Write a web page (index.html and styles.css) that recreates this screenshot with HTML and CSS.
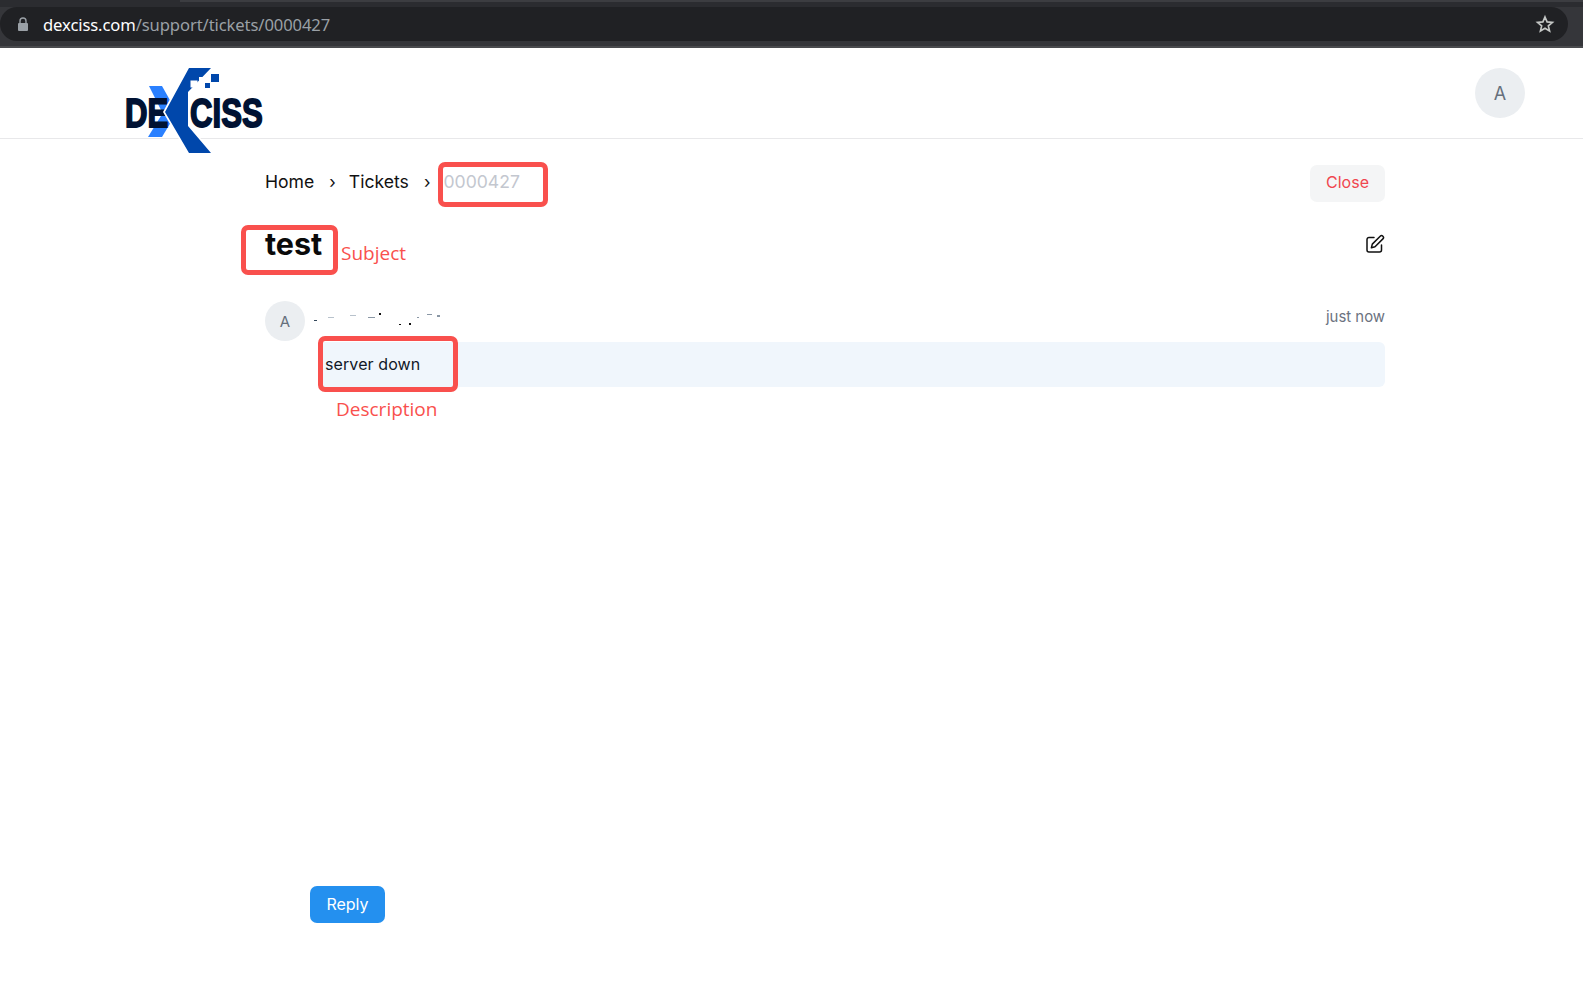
FILE: index.html
```html
<!DOCTYPE html>
<html lang="en">
<head>
<meta charset="utf-8">
<title>Ticket 0000427</title>
<link rel="stylesheet" href="styles.css">
</head>
<body>
<div class="browser">
  <div class="tabstrip"><div class="tab-edge"></div></div>
  <div class="toolbar">
    <div class="omnibox">
      <svg class="lock" viewBox="0 0 12 14" width="12" height="14"><path d="M3 6V4a3 3 0 0 1 6 0v2" fill="none" stroke="#9aa0a6" stroke-width="1.4"/><rect x="1" y="6" width="10" height="8" rx="1" fill="#9aa0a6"/></svg>
      <span class="url"><span class="host">dexciss.com</span>/support/tickets/0000427</span>
      <svg class="star" viewBox="0 0 24 24" width="20" height="20"><path d="M12 3.6l2.5 5.9 6.4.5-4.9 4.2 1.5 6.2-5.5-3.3-5.5 3.3 1.5-6.2-4.9-4.2 6.4-.5z" fill="none" stroke="#c4c7c5" stroke-width="2" stroke-linejoin="miter"/></svg>
    </div>
  </div>
</div>

<header class="site-header">
  <svg class="logo" viewBox="0 0 150 85" width="150" height="85">
    <polygon points="25,18 38,18 47,34 39,46" fill="#2a80ff"/>
    <polygon points="24,69 38,69 47,54 40,43" fill="#2a80ff"/>
    <text class="logo-text" x="1.3" y="59" transform="scale(0.76 1)">DE</text>
    <polygon points="63,0 89,0 66,24 66,58 89,85 63,85 39,44" fill="#fff"/>
    <polygon points="65,0 87,0 64,24 64,58 87,85 65,85 41,44" fill="#0047ab"/>
    <text class="logo-text" x="87" y="59" transform="scale(0.76 1)">CISS</text>
    <rect x="67" y="13" width="6" height="6" fill="#fff" stroke="#fff"/>
    <rect x="75" y="9" width="4" height="4" fill="#fff"/>
    <rect x="81" y="15" width="5" height="5" fill="#0047ab"/>
    <rect x="87" y="6" width="8" height="8" fill="#0047ab"/>
  </svg>
  <div class="avatar avatar-lg">A</div>
</header>

<main class="page">
  <div class="crumb-row">
    <nav class="crumbs">
      <span>Home</span><span class="sep">›</span><span>Tickets</span><span class="sep">›</span><span class="current">0000427</span>
    </nav>
    <button class="btn-close">Close</button>
  </div>

  <div class="title-row">
    <h1>test</h1>
    <svg class="edit" viewBox="0 0 20 20" width="20" height="20" fill="none" stroke="#111" stroke-width="1.5" stroke-linecap="round" stroke-linejoin="round"><path d="M9 3.5H4a2 2 0 0 0-2 2V16a2 2 0 0 0 2 2h10.5a2 2 0 0 0 2-2v-5"/><path d="M15.2 2.2a1.9 1.9 0 0 1 2.7 2.7L10 12.8l-3.6.9.9-3.6z"/></svg>
  </div>

  <section class="message">
    <div class="avatar avatar-sm">A</div>
    <div class="msg-main">
      <div class="msg-head">
        <svg class="smudge" viewBox="0 0 135 16" width="135" height="16"><g fill="#33475b"><rect x="1" y="11" width="3" height="1"/><rect x="15" y="8" width="6" height="1" fill="#b8c2cc"/><rect x="37" y="6" width="6" height="1" fill="#b8c2cc"/><rect x="55" y="8" width="7" height="1" fill="#8a97a5"/><rect x="66" y="4" width="2" height="2" fill="#111"/><rect x="86" y="15" width="2" height="2" fill="#111"/><rect x="96" y="14" width="2" height="2" fill="#111"/><rect x="104" y="8" width="2" height="1" fill="#8a97a5"/><rect x="114" y="5" width="5" height="1" fill="#8a97a5"/><rect x="124" y="6" width="3" height="2" fill="#8a97a5"/></g></svg>
        <span class="time">just now</span>
      </div>
      <div class="bubble">server down</div>
    </div>
  </section>

  <button class="btn-reply">Reply</button>

  <div class="mark mark-id"></div>
  <div class="mark mark-subject"></div>
  <div class="mark mark-desc"></div>
  <span class="note note-subject">Subject</span>
  <span class="note note-desc">Description</span>
</main>
</body>
</html>
```

FILE: styles.css
```css
* { box-sizing: border-box; }
html, body { margin: 0; padding: 0; background: #fff; }
body { font-family: Inter, "Liberation Sans", sans-serif; color: #111; height: 987px; overflow: hidden; }

.browser { height: 48px; background: #35363a; border-bottom: 2px solid #4a4b4e; }
.tabstrip { height: 7px; background: #2b2c30; }
.tab-edge { height: 2px; margin-left: 180px; background: #3c3d41; }
.toolbar { height: 34px; padding-right: 15px; }
.omnibox { height: 34px; background: #202124; border-radius: 17px; display: flex; align-items: center; padding: 0 13px 0 17px; }
.lock { flex: none; }
.url { font-family: "Noto Sans", "Open Sans", sans-serif; font-size: 16.6px; color: #9aa0a6; margin-left: 14px; flex: 1; letter-spacing: -0.1px; }
.host { color: #fff; }

.site-header { height: 91px; border-bottom: 1px solid #e8e8ea; padding: 20px 58px 0 124px; display: flex; justify-content: space-between; align-items: flex-start; }
.logo { flex: none; position: relative; z-index: 1; }
.logo-text { font-family: "Liberation Sans", sans-serif; font-weight: 700; font-size: 41px; fill: #001233; stroke: #001233; stroke-width: 1.8; }

.avatar { border-radius: 50%; background: #ebeef1; color: #66707c; display: flex; align-items: center; justify-content: center; flex: none; }
.avatar-lg { width: 50px; height: 50px; font-size: 18px; }
.avatar-sm { width: 40px; height: 40px; font-size: 15px; }

.page { position: relative; padding: 0 198px 0 265px; height: 849px; }

.crumb-row { display: flex; justify-content: space-between; align-items: center; padding-top: 23px; height: 62px; }
.crumbs { display: flex; align-items: center; font-size: 17.6px; color: #111; }
.sep { margin: 0 13px 0 15px; font-size: 17px; }
.current { color: #c3c7cf; }
.btn-close { width: 75px; height: 37px; margin-top: 3px; border: 0; border-radius: 7px; background: #f4f5f6; color: #f0454f; font: 16px Inter, sans-serif; padding: 0 0 3px; }

.title-row { display: flex; justify-content: space-between; align-items: center; height: 40px; margin-top: 23px; }
h1 { margin: 0; font-size: 30.5px; font-weight: 700; line-height: 40px; color: #0a0a0a; }

.message { display: flex; gap: 13px; margin-top: 37px; }
.msg-main { flex: 1; min-width: 0; }
.msg-head { display: flex; justify-content: space-between; align-items: center; height: 27px; margin-bottom: 14px; }
.smudge { margin-left: -5px; margin-top: 4px; }
.time { font-size: 14.9px; color: #6b7280; margin-top: 4px; }
.bubble { height: 45px; background: #f0f6fc; border-radius: 6px; padding: 0 7px 2px; display: flex; align-items: center; font-size: 16px; letter-spacing: 0.1px; color: #111827; }

.btn-reply { position: absolute; left: 310px; top: 747px; width: 75px; height: 37px; border: 0; border-radius: 7px; background: #2490ef; color: #fff; font: 16px Inter, sans-serif; padding: 0 0 2px; }

.mark { position: absolute; border: 5px solid #f9504d; border-radius: 7px; }
.mark-id { left: 438px; top: 23px; width: 110px; height: 45px; }
.mark-subject { left: 241px; top: 86px; width: 97px; height: 50px; }
.mark-desc { left: 318px; top: 197px; width: 140px; height: 56px; }
.note { position: absolute; font-family: "Open Sans", "Noto Sans", sans-serif; font-size: 19px; color: #f9504d; line-height: 24px; }
.note-subject { left: 341px; top: 102px; }
.note-desc { left: 336px; top: 258px; }
```
